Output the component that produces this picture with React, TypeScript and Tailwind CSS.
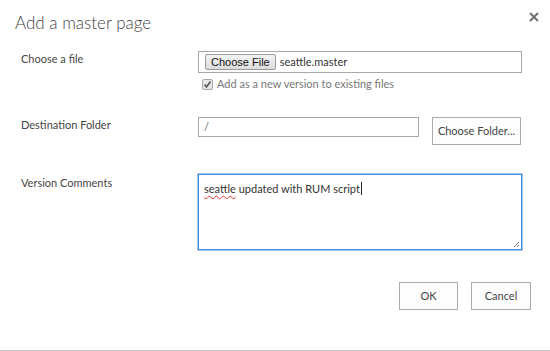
export default function App() {
  return (
    <div
      className="relative h-[351px] w-[550px] overflow-hidden border-b border-[#c6c6c6] bg-white text-[#444]"
      style={{ fontFamily: 'Lato, "Open Sans", sans-serif' }}
    >
      {/* close button */}
      <button type="button" className="absolute left-[528px] top-[11px] flex h-[12px] w-[12px] items-center justify-center">
        <svg width="10" height="10" viewBox="0 0 10 10">
          <path d="M1 1 L9 9 M9 1 L1 9" stroke="#707070" strokeWidth="2" />
        </svg>
      </button>

      <h1 className="pl-[15px] pt-[9px] text-[17px] font-light leading-[27px] text-[#444]">Add a master page</h1>

      {/* Choose a file */}
      <div className="mt-[15px] flex">
        <div className="w-[198px] pl-[21px] text-[11px] leading-[16px]">Choose a file</div>
        <div className="flex flex-col">
          <div className="flex h-[22px] w-[324px] items-center border border-[#a8a8a8] pl-[6px]">
            <span
              className="flex h-[16px] items-center rounded-[2px] border border-[#9c9c9c] bg-gradient-to-b from-[#f4f4f4] to-[#dcdcdc] px-[5px] text-[11px] text-[#111]"
              style={{ fontFamily: '"Liberation Sans", Arial, sans-serif' }}
            >
              Choose File
            </span>
            <span className="ml-[4px] text-[11px] text-[#333]">seattle.master</span>
          </div>
          <div className="mt-[3px] flex items-center pl-[4px]">
            <span className="flex h-[11px] w-[11px] items-center justify-center rounded-[2px] border border-[#a9a9a9] bg-[#e6e6e6]">
              <svg width="9" height="9" viewBox="0 0 9 9">
                <path d="M1.5 4.5 L3.5 7 L7.5 1.5" stroke="#555" strokeWidth="1.6" fill="none" />
              </svg>
            </span>
            <span className="ml-[4px] text-[11px] leading-[16px] text-[#777]">Add as a new version to existing files</span>
          </div>
        </div>
      </div>

      {/* Destination Folder */}
      <div className="mt-[25px] flex">
        <div className="w-[198px] pl-[21px] text-[11px] leading-[16px]">Destination Folder</div>
        <div className="flex items-start">
          <div className="flex h-[20px] w-[221px] items-center border border-[#a8a8a8] pl-[5px] text-[11px] text-[#666]">/</div>
          <button
            type="button"
            className="ml-[13px] h-[28px] w-[89px] border border-[#ababab] bg-[#fdfdfd] text-[11px] text-[#444]"
          >
            Choose Folder...
          </button>
        </div>
      </div>

      {/* Version Comments */}
      <div className="mt-[29px] flex">
        <div className="w-[198px] pl-[21px] pt-[1px] text-[11px] leading-[16px]">Version Comments</div>
        <div className="relative h-[76px] w-[324px] border border-[#3c8be6] px-[5px] pt-0 shadow-[0_0_0_1px_#a8caf2]">
          <span className="text-[11px] leading-[16px] text-[#333]">
            <span className="underline decoration-[#e03030] decoration-wavy decoration-1 underline-offset-2">seattle</span> updated with RUM script
          </span>
          <span className="ml-[1px] inline-block h-[13px] w-[1px] translate-y-[2px] bg-[#222]" />
          <svg className="absolute bottom-[1px] right-[1px]" width="8" height="8" viewBox="0 0 8 8">
            <path d="M7 2 L2 7 M7 5 L5 7" stroke="#777" strokeWidth="1" />
          </svg>
        </div>
      </div>

      {/* buttons */}
      <div className="mt-[32px] flex justify-end gap-[13px] pr-[19px]">
        <button type="button" className="h-[28px] w-[59px] border border-[#ababab] bg-[#fdfdfd] text-[11px] text-[#444]">
          OK
        </button>
        <button type="button" className="h-[28px] w-[60px] border border-[#ababab] bg-[#fdfdfd] text-[11px] text-[#444]">
          Cancel
        </button>
      </div>
    </div>
  );
}
